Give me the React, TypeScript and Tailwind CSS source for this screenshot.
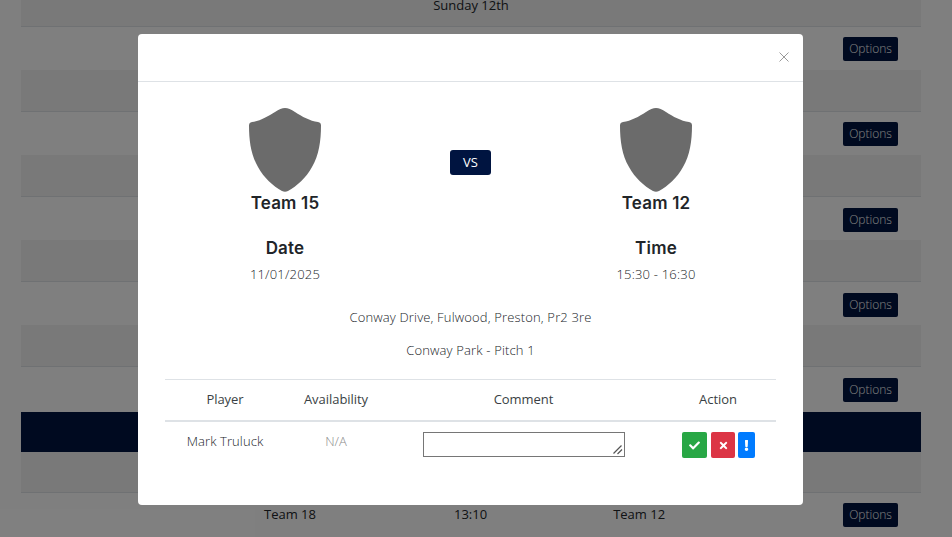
import { FaCheck, FaExclamation, FaTimes } from "react-icons/fa";

const sans = "font-['Open_Sans',sans-serif]";
const heading = "font-['Inter',sans-serif]";

function Shield() {
  return (
    <svg width="72" height="85" viewBox="0 0 72 85" className="block">
      <path
        fill="#6b6b6b"
        d="M36 1C33 1 30 2.5 26 5C19 9.5 11 14 3 15C1 15.3 0 16.5 0 18.5C0 34 2 48 9 60C15 71 24 79 33 84C35 85 37 85 39 84C48 79 57 71 63 60C70 48 72 34 72 18.5C72 16.5 71 15.3 69 15C61 14 53 9.5 46 5C42 2.5 39 1 36 1Z"
      />
    </svg>
  );
}

function OptionsButton() {
  return (
    <button type="button" className="h-6 w-[55px] rounded-[2px] bg-[#001440] text-xs font-light text-white">
      Options
    </button>
  );
}

function OptionsRow({ low }: { low?: boolean }) {
  return (
    <div>
      <div className={`flex h-[43px] items-center justify-end pr-[23px] ${low ? "pt-[2px]" : ""}`}>
        <OptionsButton />
      </div>
      <div className="h-[42px] border-b border-[#dee2e6] bg-[#f2f2f2]" />
    </div>
  );
}

function TeamColumn({ name, label, value }: { name: string; label: string; value: string }) {
  return (
    <div className="flex w-[200px] flex-col items-center">
      <Shield />
      <div className={`${heading} mt-[1px] text-[17px] leading-[20px] font-semibold tracking-[0.2px] text-[#212529]`}>{name}</div>
      <div className={`${heading} mt-[25px] text-[17px] leading-[20px] font-semibold tracking-[0.2px] text-[#212529]`}>{label}</div>
      <div className="mt-[6px] text-[13px] leading-[20px] font-light tracking-[0.2px] text-[#212529]">{value}</div>
    </div>
  );
}

export default function App() {
  return (
    <div className={`${sans} relative h-[537px] w-[952px] overflow-hidden bg-white`}>
      {/* fixture list behind the dialog */}
      <div className="ml-[21px] w-[900px] text-[13px] text-[#212529]">
        <div className="h-[27px] border-b border-[#dee2e6] bg-[#f2f2f2] text-center leading-[11px]">Sunday 12th</div>
        <OptionsRow />
        <OptionsRow />
        <OptionsRow low />
        <OptionsRow low />
        <div className="flex h-[45px] items-center justify-end pr-[23px]">
          <OptionsButton />
        </div>
        <div className="h-10 bg-[#001440]" />
        <div className="h-[41px] border-b border-[#dee2e6] bg-[#f2f2f2]" />
        <div className="flex h-11 items-center">
          <span className="ml-[243px]">Team 18</span>
          <span className="ml-[138px]">13:10</span>
          <span className="ml-[126px]">Team 12</span>
          <div className="ml-auto mr-[23px]">
            <OptionsButton />
          </div>
        </div>
      </div>

      <div className="absolute inset-0 bg-black/50" />

      {/* fixture dialog */}
      <div className="absolute top-[34px] left-[138px] h-[471px] w-[665px] rounded-[4px] bg-white">
        <div className="flex h-[48px] items-center justify-end border-b border-[#dee2e6] pr-[14px] pb-[2px]">
          <svg width="10" height="10" viewBox="0 0 10 10">
            <path d="M0.5 0.5L9.5 9.5M9.5 0.5L0.5 9.5" stroke="#9a9a9a" strokeWidth="1" fill="none" />
          </svg>
        </div>
        <div className="px-[27px] pt-[25px]">
          <div className="flex items-start px-[20px]">
            <TeamColumn name="Team 15" label="Date" value="11/01/2025" />
            <div className="flex flex-1 justify-center pt-[43px]">
              <span className="flex h-[25px] w-[41px] items-center justify-center rounded-[3px] bg-[#001440] text-[13px] text-white">
                VS
              </span>
            </div>
            <TeamColumn name="Team 12" label="Time" value="15:30 - 16:30" />
          </div>

          <p className="mt-[23px] text-center text-[13px] leading-[20px] font-light tracking-[0.16px] text-[#212529]">
            Conway Drive, Fulwood, Preston, Pr2 3re
          </p>
          <p className="mt-[13px] text-center text-[13px] leading-[20px] font-light tracking-[0.16px] text-[#212529]">
            Conway Park - Pitch 1
          </p>

          <div className="mt-[19px] grid grid-cols-[120px_102px_273px_116px] border-t border-[#dee2e6] text-center text-[#3a3f44]">
            <div className="border-b-2 border-[#dee2e6] pt-[9px] pb-[11px] text-[13px] leading-[20px] tracking-[-0.05px]">Player</div>
            <div className="border-b-2 border-[#dee2e6] pt-[9px] pb-[11px] text-[13px] leading-[20px] tracking-[-0.05px]">Availability</div>
            <div className="border-b-2 border-[#dee2e6] pt-[9px] pb-[11px] text-[13px] leading-[20px] tracking-[-0.05px]">Comment</div>
            <div className="border-b-2 border-[#dee2e6] pt-[9px] pb-[11px] text-[13px] leading-[20px] tracking-[-0.05px]">Action</div>
            <div className="pt-[9px] text-[13px] leading-[20px] font-light tracking-[0.1px] text-[#212529]">Mark Truluck</div>
            <div className="pt-[9px] text-[13px] leading-[20px] font-light text-[#8a8a8a]">N/A</div>
            <div className="flex justify-center pt-[10px]">
              <div className="relative h-[25px] w-[202px]">
                <textarea className="block h-[25px] w-[202px] resize-none border border-[#767676] bg-white" />
                <svg width="10" height="10" viewBox="0 0 10 10" className="pointer-events-none absolute right-[2px] bottom-[2px]">
                  <path d="M0.5 8.5L8.5 0.5M4.5 9L9 4.5" stroke="#555555" strokeWidth="1.2" fill="none" />
                </svg>
              </div>
            </div>
            <div className="flex justify-center pt-[10px] pl-[1px]">
              <button type="button" className="flex h-[26px] w-[25px] items-center justify-center rounded-[2px] bg-[#28a745] text-white">
                <FaCheck size={11} />
              </button>
              <button type="button" className="ml-[4px] flex h-[26px] w-[24px] items-center justify-center rounded-[2px] bg-[#dc3545] text-white">
                <FaTimes size={11} />
              </button>
              <button type="button" className="ml-[3px] flex h-[26px] w-[17px] items-center justify-center rounded-[2px] bg-[#007bff] text-white">
                <FaExclamation size={11} />
              </button>
            </div>
          </div>
        </div>
      </div>
    </div>
  );
}
